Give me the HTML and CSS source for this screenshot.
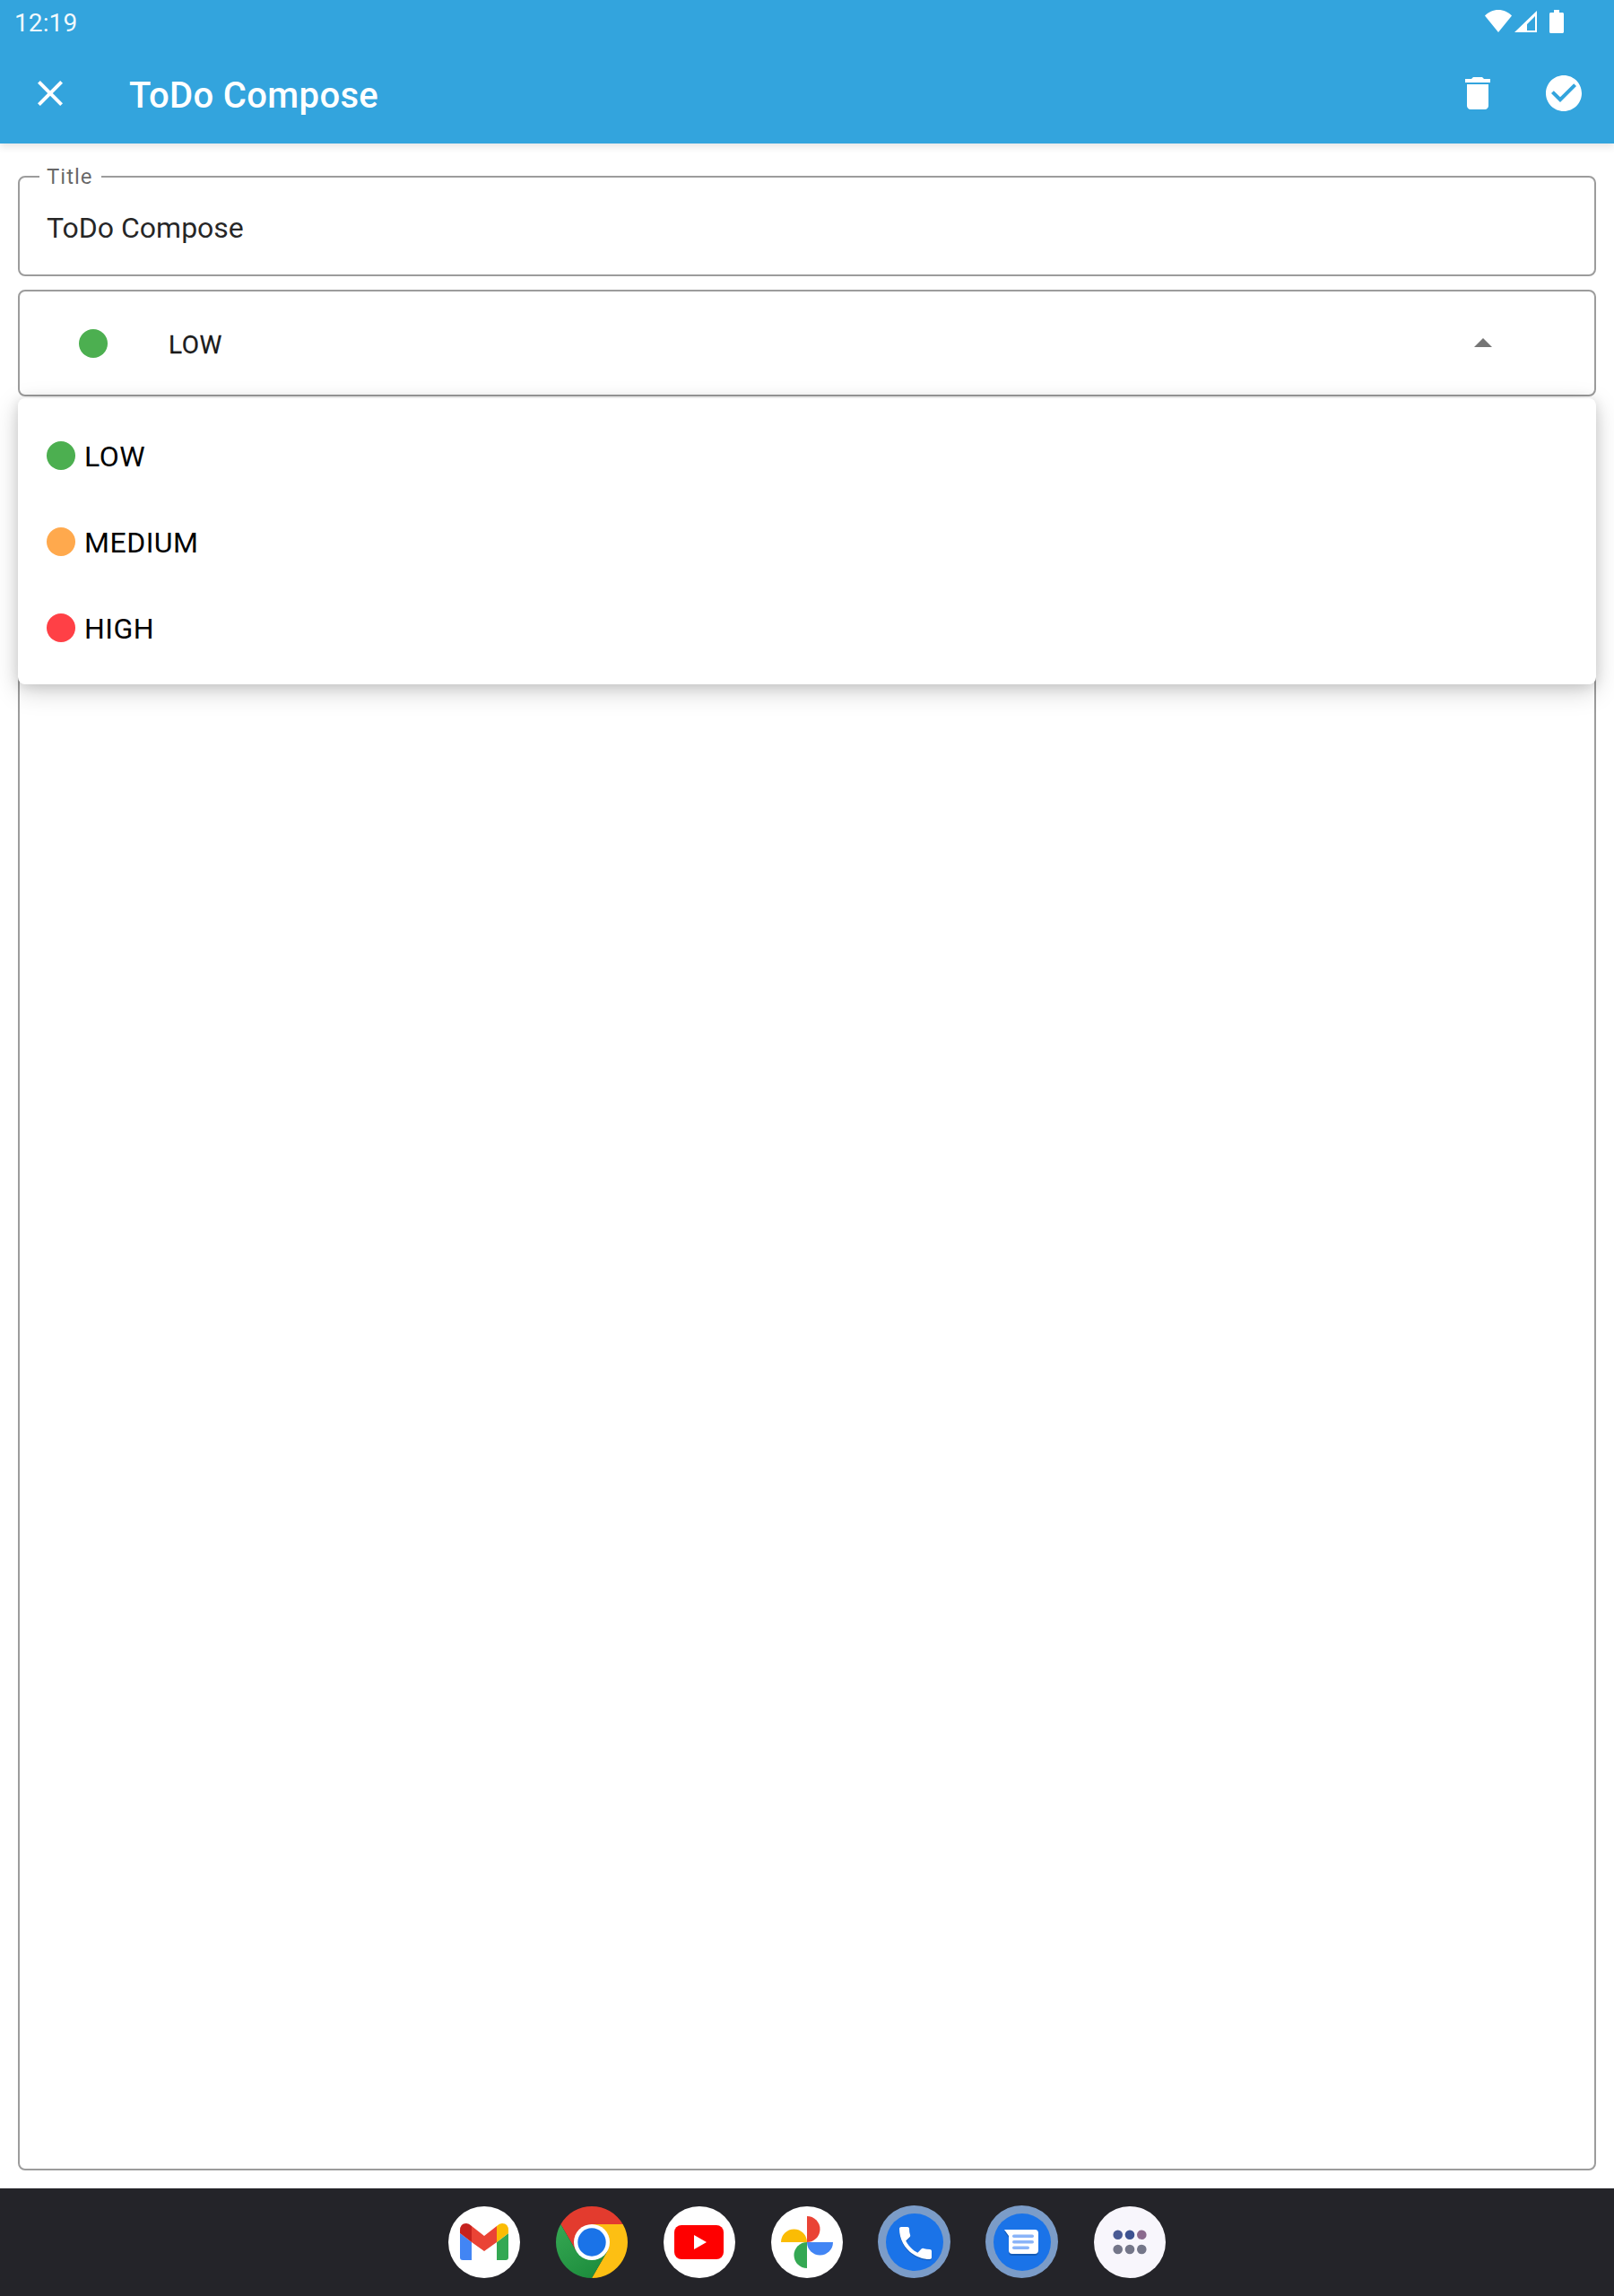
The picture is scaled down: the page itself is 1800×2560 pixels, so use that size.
FILE: index.html
```html
<!DOCTYPE html>
<html lang="en">
<head>
<meta charset="utf-8">
<title>ToDo Compose</title>
<link rel="stylesheet" href="styles.css">
</head>
<body>
<div class="page">
  <header class="appbar">
    <div class="statusbar">
      <span class="time">12:19</span>
      <div class="status-icons">
        <svg class="st-wifi" width="30" height="25" viewBox="0 0 30 25"><path fill="#fff" d="M15 25 0 6.500C4 2.500 9 0 15 0s11 2.500 15 6.500z"/></svg>
        <svg class="st-signal" width="25" height="24" viewBox="0 0 25 24"><path fill="#fff" fill-rule="evenodd" d="M0 24 25 0v24zM23 6l-9 9v7h9z"/></svg>
        <svg class="st-battery" width="16" height="26" viewBox="0 0 16 26"><path fill="#fff" d="M5 0h6v3h3.500c.8 0 1.500.7 1.500 1.500v20c0 .8-.7 1.500-1.500 1.500h-13C.7 26 0 25.300 0 24.500v-20C0 3.700.7 3 1.500 3H5z"/></svg>
      </div>
    </div>
    <div class="toolbar">
      <svg class="icon close" viewBox="0 0 24 24"><path fill="#fff" d="M19 6.410 17.590 5 12 10.590 6.410 5 5 6.410 10.590 12 5 17.590 6.410 19 12 13.410 17.590 19 19 17.590 13.410 12z"/></svg>
      <h1 class="apptitle">ToDo Compose</h1>
      <svg class="icon delete" viewBox="0 0 24 24"><path fill="#fff" d="M6 19c0 1.100.9 2 2 2h8c1.100 0 2-.9 2-2V7H6zM19 4h-3.500l-1-1h-5l-1 1H5v2h14z"/></svg>
      <svg class="icon check" viewBox="0 0 24 24"><path fill="#fff" d="M12 2C6.480 2 2 6.480 2 12s4.480 10 10 10 10-4.480 10-10S17.520 2 12 2zm-2 15-5-5 1.410-1.410L10 14.170l7.590-7.590L19 8z"/></svg>
    </div>
  </header>

  <main class="content">
    <div class="field title-field">
      <span class="field-label">Title</span>
      <span class="field-value">ToDo Compose</span>
    </div>
    <div class="field priority-field">
      <span class="dot dot-low selected-dot"></span>
      <span class="selected-text">LOW</span>
      <svg class="icon arrow" viewBox="0 0 24 24"><path d="M7 14l5-5 5 5z"/></svg>
      <ul class="menu">
        <li class="menu-item"><span class="dot dot-low"></span><span class="menu-text">LOW</span></li>
        <li class="menu-item"><span class="dot dot-medium"></span><span class="menu-text">MEDIUM</span></li>
        <li class="menu-item"><span class="dot dot-high"></span><span class="menu-text">HIGH</span></li>
      </ul>
    </div>
    <div class="field description-field"></div>
  </main>

  <nav class="dock">
    <svg class="app" viewBox="0 0 80 80">
      <circle cx="40" cy="40" r="40" fill="#fff"/>
      <path fill="#4285F4" d="M13 30 26 40v20H16q-3 0-3-3z"/>
      <path fill="#34A853" d="M67 30 54 40v20h10q3 0 3-3z"/>
      <path fill="#EA4335" d="M26 22 40 33 54 22v18L40 50 26 40z"/>
      <path fill="#C5221F" d="M13 30v-3q0-8 7-8 3 0 6 3v18z"/>
      <path fill="#FBBC04" d="M54 22q3-3 6-3 7 0 7 8v3L54 40z"/>
    </svg>
    <svg class="app" viewBox="0 0 80 80">
      <defs>
        <linearGradient id="chromeGreen" x1="0" y1="0" x2="0.6" y2="1"><stop offset="0" stop-color="#36A853"/><stop offset="1" stop-color="#1E8E3E"/></linearGradient>
      </defs>
      <path fill="#E33B2E" d="M5.360 20A40 40 0 0 1 74.640 20H40L22.680 50z"/>
      <path fill="#FDBF13" d="M74.640 20A40 40 0 0 1 40 80L57.320 50 40 20z"/>
      <path fill="url(#chromeGreen)" d="M40 80A40 40 0 0 1 5.360 20L22.680 50H57.320z"/>
      <circle cx="40" cy="40" r="20" fill="#fff"/>
      <circle cx="40" cy="40" r="15.700" fill="#1A73E8"/>
    </svg>
    <svg class="app" viewBox="0 0 80 80">
      <circle cx="40" cy="40" r="40" fill="#fff"/>
      <rect x="12" y="21" width="55" height="38" rx="8" fill="#f00"/>
      <path fill="#fff" d="M34 32 48 40 34 48z"/>
    </svg>
    <svg class="app" viewBox="0 0 80 80">
      <circle cx="40" cy="40" r="40" fill="#fff"/>
      <path fill="#EA4335" d="M40 11A14.500 14.500 0 0 1 40 40z"/>
      <path fill="#FBBC04" d="M11 40A14.500 14.500 0 0 1 40 40z"/>
      <path fill="#4285F4" d="M40 40H69A14.500 14.500 0 0 1 40 40z"/>
      <path fill="#34A853" d="M40 40V69A14.500 14.500 0 0 1 40 40z"/>
    </svg>
    <svg class="app" viewBox="0 0 80 80">
      <circle cx="39.500" cy="39.500" r="40.500" fill="#7B9CC8"/>
      <circle cx="40" cy="40" r="32" fill="#1A73E8"/>
      <g transform="translate(17 17) scale(2)">
        <path fill="#000" fill-opacity=".2" transform="translate(0 .6)" d="M6.620 10.790c1.440 2.830 3.760 5.140 6.590 6.590l2.200-2.200c.27-.27.67-.36 1.020-.24 1.120.37 2.330.57 3.570.57.55 0 1 .45 1 1V20c0 .55-.45 1-1 1-9.390 0-17-7.610-17-17 0-.55.45-1 1-1h3.500c.55 0 1 .45 1 1 0 1.250.2 2.450.57 3.570.11.35.03.74-.25 1.020z"/>
        <path fill="#fff" d="M6.620 10.790c1.440 2.830 3.760 5.140 6.590 6.590l2.200-2.200c.27-.27.67-.36 1.020-.24 1.120.37 2.330.57 3.570.57.55 0 1 .45 1 1V20c0 .55-.45 1-1 1-9.390 0-17-7.610-17-17 0-.55.45-1 1-1h3.500c.55 0 1 .45 1 1 0 1.250.2 2.450.57 3.570.11.35.03.74-.25 1.020z"/>
      </g>
    </svg>
    <svg class="app" viewBox="0 0 80 80">
      <circle cx="39.500" cy="39.500" r="40.500" fill="#7B9CC8"/>
      <circle cx="40" cy="40" r="32" fill="#1A73E8"/>
      <path fill="#000" fill-opacity=".2" d="M20 28H54q4 0 4 4V51q0 4-4 4H29q-4 0-4-4V35z"/>
      <path fill="#fff" d="M20 26H54q4 0 4 4V49q0 4-4 4H29q-4 0-4-4V33z"/>
      <rect x="29" y="31.500" width="24" height="3.500" rx="1.750" fill="#8AB4F8"/>
      <rect x="29" y="38" width="24" height="3.500" rx="1.750" fill="#8AB4F8"/>
      <rect x="29" y="44.500" width="19" height="3.500" rx="1.750" fill="#8AB4F8"/>
    </svg>
    <svg class="app" viewBox="0 0 80 80">
      <circle cx="40" cy="40" r="40" fill="#F8F6FC"/>
      <circle cx="26.700" cy="31.700" r="5.300" fill="#4A5A94"/>
      <circle cx="40" cy="31.700" r="5.300" fill="#3D5291"/>
      <circle cx="53.300" cy="31.700" r="5.300" fill="#8B6A8E"/>
      <circle cx="26.700" cy="48" r="5.300" fill="#747689"/>
      <circle cx="40" cy="48" r="5.300" fill="#747689"/>
      <circle cx="53.300" cy="48" r="5.300" fill="#747689"/>
    </svg>
  </nav>
</div>
</body>
</html>
```
FILE: styles.css
```css
* { box-sizing: border-box; }
html, body { margin: 0; padding: 0; background: #fff; }
body { font-family: Roboto, "Noto Sans", sans-serif; }

.page {
  width: 1800px;
  height: 2560px;
  display: flex;
  flex-direction: column;
  overflow: hidden;
}

.appbar {
  flex: none;
  height: 160px;
  background: #33A4DD;
  color: #fff;
  box-shadow: 0 4px 8px rgba(0, 0, 0, .1);
  position: relative;
  z-index: 1;
  display: flex;
  flex-direction: column;
}

.statusbar {
  height: 48px;
  display: flex;
  align-items: center;
  padding: 0 56px 0 16px;
}
.time { font-size: 28px; line-height: 48px; letter-spacing: .1px; margin-top: 3px; color: rgba(255, 255, 255, .95); }
.status-icons { margin-left: auto; display: flex; align-items: flex-start; height: 48px; padding-top: 11px; }
.status-icons svg { display: block; }
.st-signal { margin: 1px 14px 0 3px; }

.toolbar { height: 112px; display: flex; align-items: center; padding: 0 32px; }
.icon { width: 48px; height: 48px; flex: none; display: block; }
.apptitle { margin: 5px 0 0 64px; font-size: 40px; font-weight: 500; line-height: 48px; letter-spacing: .35px; flex: 1; }
.check { margin-left: 48px; }

.content {
  flex: 1;
  min-height: 0;
  display: flex;
  flex-direction: column;
  gap: 16px;
  padding: 36px 20px 20px;
}

.field { border: 2px solid #9c9c9c; border-radius: 8px; position: relative; }

.title-field { height: 112px; padding: 0 31px 0 30px; display: flex; align-items: center; }
.field-label {
  position: absolute;
  left: 22px;
  top: -15px;
  padding: 0 9px 0 8px;
  background: #fff;
  font-size: 24px;
  line-height: 28px;
  letter-spacing: 1px;
  color: rgba(0, 0, 0, .6);
}
.field-value { font-size: 32px; line-height: 40px; color: rgba(0, 0, 0, .87); margin-top: 4px; }

.priority-field { height: 119px; display: flex; align-items: center; margin-top: -1px; }
.dot { width: 32px; height: 32px; border-radius: 50%; flex: none; display: block; }
.dot-low { background: #4CAF50; }
.dot-medium { background: #FFA94D; }
.dot-high { background: #FF4046; }
.selected-dot { margin-left: 66px; }
.selected-text { margin-left: 68px; font-size: 28px; font-weight: 400; letter-spacing: .5px; color: rgba(0, 0, 0, .9); -webkit-text-stroke: .3px rgba(0, 0, 0, .9); margin-top: 3px; }
.arrow { margin-left: auto; margin-right: 100px; fill: rgba(0, 0, 0, .54); }

.menu {
  position: absolute;
  left: -2px;
  right: -2px;
  top: calc(100% + 4px);
  margin: 0;
  padding: 16px 0 15px;
  list-style: none;
  background: #fff;
  border-radius: 8px;
  box-shadow: 0 8px 28px rgba(0, 0, 0, .18), 0 2px 14px rgba(0, 0, 0, .12);
  z-index: 2;
}
.menu-item { height: 96px; display: flex; align-items: center; padding-left: 32px; }
.menu-text { margin-left: 10px; font-size: 32px; letter-spacing: .5px; color: #000; margin-top: 1px; }

.description-field { flex: 1; min-height: 0; }

.dock {
  flex: none;
  height: 120px;
  background: #242429;
  display: flex;
  justify-content: center;
  align-items: center;
  gap: 40px;
}
.app { width: 80px; height: 80px; flex: none; display: block; overflow: visible; }
```
